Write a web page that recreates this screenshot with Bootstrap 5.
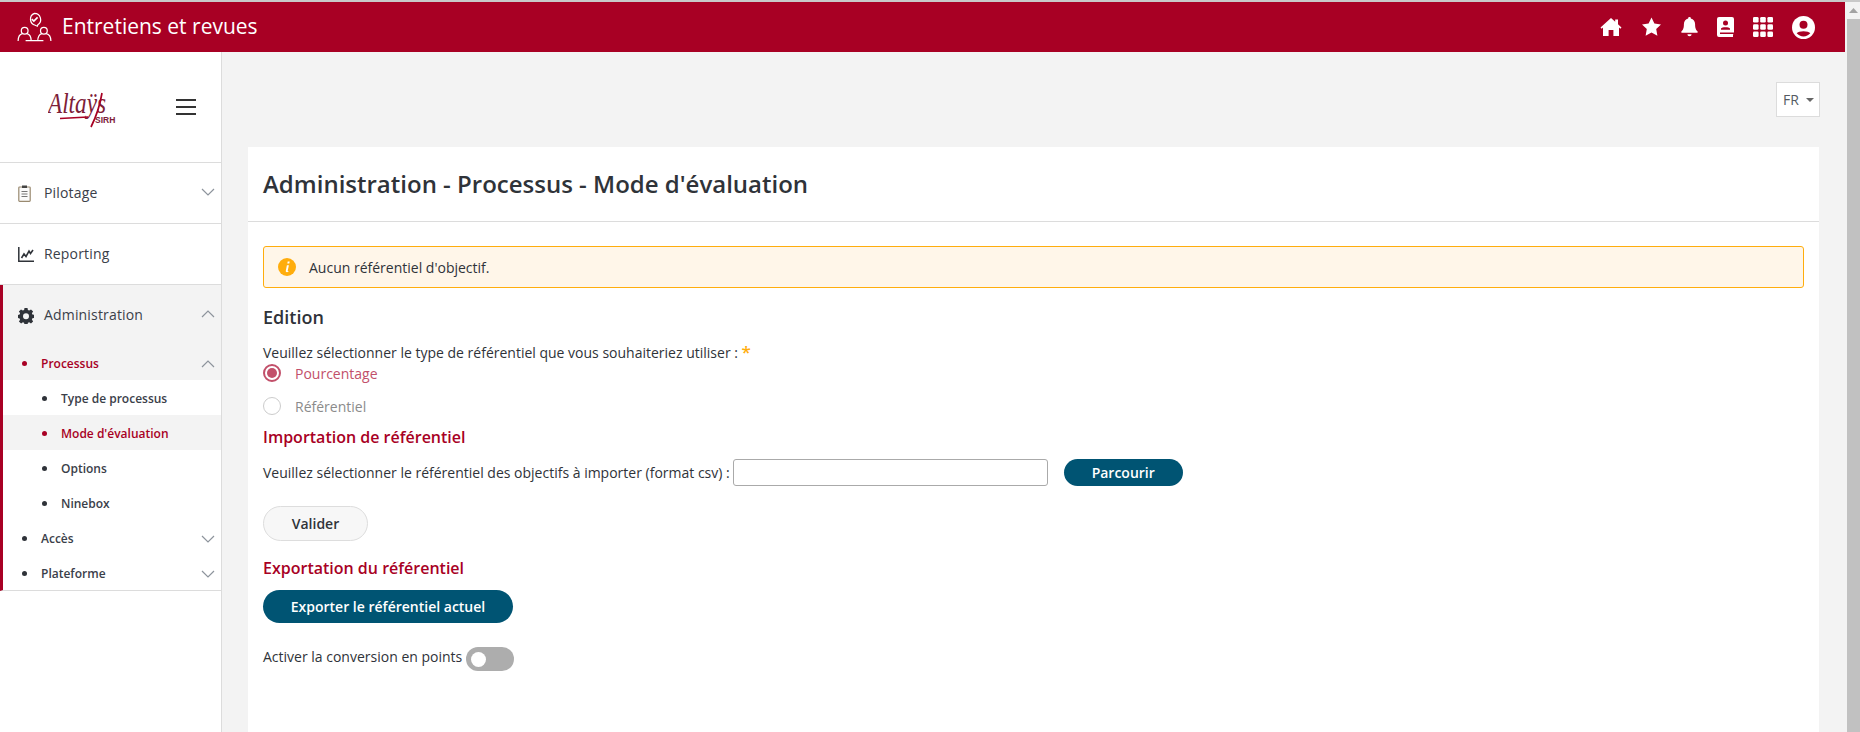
<!doctype html>
<html lang="fr">
<head>
<meta charset="utf-8">
<title>Entretiens et revues</title>
<link href="https://cdn.jsdelivr.net/npm/bootstrap@5.3.0/dist/css/bootstrap.min.css" rel="stylesheet">
<style>
html,body{height:100%;overflow:hidden}
body{font-family:"Open Sans","Noto Sans",sans-serif;font-size:14px;color:#2f3339;background:#f3f3f3}
.top-rule{height:2px;background:#c9c9c9}
.frame{height:730px}
.scroll-track{width:15px;background:#f3f3f3;flex:none;padding-left:2px}
.scroll-arrow{height:17px;color:#a3a3a3}
.scroll-thumb{background:#c1c1c1;height:713px}
.app-bar{height:50px;background:#a80024;color:#fff;padding:0 30px 0 17px;flex:none}
.app-name{font-size:21px;line-height:1;margin-left:10px;padding-bottom:1px}
.app-icons{gap:19px}
.side{width:222px;background:#fff;border-right:1px solid #dcdcdc;flex:none}
.brand-box{height:111px;border-bottom:1px solid #dcdcdc;padding-left:48px;padding-right:25px}
.burger{width:20px;height:16px;border-top:2px solid #333;border-bottom:2px solid #333;background:linear-gradient(#333,#333) center/100% 2px no-repeat}
.menu-top{height:61px;border-bottom:1px solid #dcdcdc;padding:0 6px 2px 18px;font-weight:500;color:#3a4049;font-size:14px;letter-spacing:.012em}
.menu-top .ico{width:20px;margin-right:6px}
.menu-group{border-left:3px solid #a80024;border-bottom:1px solid #dcdcdc}
.menu-head{height:60px;background:#f3f3f3;padding:0 6px 2px 15px;font-weight:500;color:#3a4049;letter-spacing:.012em}
.menu-head .ico{width:20px;margin-right:6px}
.menu-row{height:35px;padding:2px 6px 0 19px;font-size:12px;font-weight:600;color:#3a4049}
.menu-row.sub{padding-left:39px}
.menu-row.on{color:#a80024}
.menu-row.tint{background:#f3f3f3}
.dot{width:5px;height:5px;border-radius:50%;background:#2f3339;margin-right:14px;flex:none}
.on .dot{background:#a80024}
.lang-row{height:95px;padding-top:30px;margin-right:-1px;flex:none}
.lang-box{width:44px;height:35px;background:#fff;border:1px solid #dcdcdc;font-size:14px;color:#555b62;padding-left:6px}
.lang-caret{width:0;height:0;border:4px solid transparent;border-top-color:#666;border-bottom:0;margin-left:7px}
.main-wrap{padding:0 26px;min-width:0}
.sheet{background:#fff;min-height:0}
.sheet-head{height:75px;border-bottom:1px solid #dcdcdc;padding:0 15px}
.sheet-title{font-size:24px;font-weight:600;color:#2f3339;margin:0;line-height:1}
.sheet-body{padding:24px 15px 0 15px}
.notice{height:42px;background:#fff6e9;border:1px solid #ffad0d;border-radius:3px;padding-left:14px;margin-bottom:17px}
.notice-text{margin-left:13px}
.sec-title{font-size:18px;font-weight:600;line-height:24px;margin:0 0 14px}
.line-label{line-height:20px;font-size:14px}
.star{color:#ffad0d;font-size:17px;font-weight:600;line-height:1}
.radio-line{height:34px}
.radio-line.first{height:20px;margin-bottom:6px}
.radio-dot{width:18px;height:18px;border-radius:50%;border:1px solid #ccc;margin-right:14px;flex:none;background:#fff}
.radio-dot.sel{border:2px solid #c2506a;position:relative}
.radio-dot.sel::after{content:"";position:absolute;inset:2px;border-radius:50%;background:#c2506a}
.radio-lab{color:#8b8b8b}
.radio-lab.sel{color:#c2506a}
.red-title{font-size:16px;font-weight:600;color:#a80024;line-height:22px;margin:3px 0 0}
.import-row{margin-top:11px;height:27px}
.file-box{width:315px;height:27px;border:1px solid #aaa;border-radius:3px;background:#fff;margin:0 16px 0 3px}
.pill-dark{background:#005473;color:#fff;border:0;border-radius:20px;font-weight:600;font-size:14px;padding:0}
.pill-dark:hover{background:#005473;color:#fff}
.browse{width:119px;height:27px}
.export{width:250px;height:33px;margin-top:11px}
.pill-light{width:105px;height:35px;border:1px solid #ddd;border-radius:20px;background:#f7f7f7;font-weight:600;font-size:14px;color:#2f3339;padding:0;margin:20px 0 16px}
.switch-row{margin-top:23px}
.switch-row>span:first-child{margin-bottom:5px}
.switcher{width:48px;height:24px;border-radius:12px;background:#adadad;margin-left:4px;padding-left:5px}
.switcher i{display:block;width:15px;height:15px;border-radius:50%;background:#fff}
</style>
</head>
<body>
<div class="top-rule"></div>
<div class="d-flex frame">
  <div class="flex-grow-1 d-flex flex-column" style="min-width:0">
    <header class="app-bar d-flex align-items-center justify-content-between">
      <div class="d-flex align-items-center">
        <svg width="35" height="30" viewBox="0 0 37 32" fill="none" stroke="#fff" stroke-width="1.3" aria-hidden="true">
          <path d="M18.5 1.5a6.6 6.6 0 0 1 3.6 12.1l-.6 1.6-2.2-1.1a6.6 6.6 0 0 1-.8-12.6z"/>
          <path d="M15.6 7.6l2.2 2.2 4-4" stroke-width="1.7"/>
          <circle cx="8" cy="20" r="3.6"/><circle cx="28.5" cy="20" r="3.6"/>
          <path d="M1 31c0-5 2.2-7.4 4.6-8M15 31c0-5-2.2-7.4-4.6-8M22 31c0-5 2.2-7.4 4.3-8M36 31c0-5-2.2-7.4-5-8M9 30.5h19"/>
        </svg>
        <span class="app-name">Entretiens et revues</span>
      </div>
      <div class="d-flex align-items-center app-icons">
        <svg width="22" height="20" viewBox="0 0 22 20" fill="#fff" aria-hidden="true"><path d="M11 1 .5 10.4l1.2 1.3L3 10.6V19h5.6v-6h4.8v6H19v-8.4l1.3 1.1 1.2-1.3L18 7.2V2.500h-2.800v2.200z"/></svg>
        <svg width="21" height="20" viewBox="0 0 20 20" fill="#fff" aria-hidden="true"><path d="M10 .6l2.900 6 6.600.9-4.800 4.600 1.200 6.600L10 15.500l-5.900 3.200 1.200-6.600L.5 7.500l6.600-.9z"/></svg>
        <svg width="17" height="20" viewBox="0 0 17 20" fill="#fff" aria-hidden="true"><path d="M8.500 0a1.300 1.300 0 0 1 1.300 1.500c2.700.6 4.300 2.900 4.300 5.700 0 4.300 1 5.600 2.500 7.300.5.500.2 1.300-.6 1.300H1c-.8 0-1.100-.8-.6-1.300C1.900 12.800 2.900 11.500 2.900 7.200c0-2.800 1.600-5.100 4.300-5.700A1.300 1.300 0 0 1 8.500 0zM6.400 17.200h4.200a2.100 2.100 0 0 1-4.200 0z"/></svg>
        <svg width="17" height="20" viewBox="0 0 17 20" aria-hidden="true"><path fill="#fff" d="M2 0h13a2 2 0 0 1 2 2v14c0 .7-.4 1.200-1 1.400v2.600H2a2 2 0 0 1-2-2V2a2 2 0 0 1 2-2z"/><circle cx="8.500" cy="6" r="2.500" fill="#a80024"/><path fill="#a80024" d="M4 11.500c1-1.700 8-1.700 9 0v1.300H4zM3 15.500h14v1.500H3z"/></svg>
        <svg width="20" height="20" viewBox="0 0 20 20" fill="#fff" aria-hidden="true"><rect width="5.600" height="5.600" rx="1.300"/><rect x="7.200" width="5.600" height="5.600" rx="1.300"/><rect x="14.400" width="5.600" height="5.600" rx="1.300"/><rect y="7.200" width="5.600" height="5.600" rx="1.300"/><rect x="7.200" y="7.200" width="5.600" height="5.600" rx="1.300"/><rect x="14.400" y="7.200" width="5.600" height="5.600" rx="1.300"/><rect y="14.400" width="5.600" height="5.600" rx="1.300"/><rect x="7.200" y="14.400" width="5.600" height="5.600" rx="1.300"/><rect x="14.400" y="14.400" width="5.600" height="5.600" rx="1.300"/></svg>
        <svg width="23" height="23" viewBox="0 0 23 23" aria-hidden="true"><circle cx="11.500" cy="11.500" r="11.500" fill="#fff"/><circle cx="11.500" cy="8.800" r="4" fill="#a80024"/><path fill="#a80024" d="M4.700 17.300c1.500-2.800 12.100-2.800 13.600 0a9 9 0 0 1-13.600 0z"/></svg>
      </div>
    </header>
    <div class="d-flex flex-grow-1" style="min-height:0">
      <aside class="side">
        <div class="brand-box d-flex align-items-center justify-content-between">
          <svg width="70" height="44" viewBox="0 0 70 44" aria-label="Altaÿs SIRH">
            <text x="0" y="28" font-family="Liberation Serif" font-style="italic" font-size="30" fill="#7d2037" textLength="58" lengthAdjust="spacingAndGlyphs">Altaÿs</text>
            <path d="M12 33.500l28-1.500M54 8c-2 12-6 24-11 34" fill="none" stroke="#a80024" stroke-width="1.700"/>
            <text x="47" y="38" font-family="Liberation Sans" font-weight="700" font-size="8.500" fill="#7d2037">SIRH</text>
          </svg>
          <div class="burger"></div>
        </div>
        <div class="menu-top d-flex align-items-center">
          <span class="ico"><svg width="13" height="17" viewBox="0 0 13 17" fill="none"><rect x=".8" y="2" width="11.400" height="14.300" rx=".8" stroke="#9a8a70" stroke-width="1.200" fill="#fbfbfb"/><rect x="4" y=".5" width="5" height="2.500" fill="#444"/><path d="M3.500 6.500h6M3.500 9h6M3.500 11.500h6" stroke="#777" stroke-width="1"/></svg></span>
          <span class="flex-grow-1">Pilotage</span>
          <svg width="14" height="8" viewBox="0 0 14 8" fill="none" stroke="#8d949c" stroke-width="1.200"><path d="M1 1l6 6 6-6"/></svg>
        </div>
        <div class="menu-top d-flex align-items-center">
          <span class="ico"><svg width="16" height="15" viewBox="0 0 16 15" fill="none" stroke="#2f3339"><path d="M.8 0v14.200H16" stroke-width="1.500"/><path d="M3.500 11l2.500-4 2 2.500L11 4l1.500 2.500L15 3" stroke-width="1.600"/></svg></span>
          <span class="flex-grow-1">Reporting</span>
        </div>
        <div class="menu-group">
          <div class="menu-head d-flex align-items-center">
            <span class="ico"><svg width="16" height="16" viewBox="0 0 16 16" aria-hidden="true"><path fill="#2f3339" fill-rule="evenodd" d="M6.500 0h3l.4 2.100 1.300.5L13 1.400l2.100 2.100-1.200 1.800.5 1.200 2.100.4v3l-2.100.4-.5 1.300 1.200 1.800-2.100 2.100-1.800-1.200-1.300.5-.4 2.100h-3l-.4-2.100-1.200-.5-1.800 1.200L.9 13.500l1.200-1.800-.5-1.300L0 10V7l1.600-.5.500-1.200L.9 3.500 3 1.400l1.800 1.200 1.300-.5zM8 5.300a3 3 0 1 0 0 6 3 3 0 0 0 0-6z"/></svg></span>
            <span class="flex-grow-1">Administration</span>
            <svg width="14" height="8" viewBox="0 0 14 8" fill="none" stroke="#8d949c" stroke-width="1.200"><path d="M1 7l6-6 6 6"/></svg>
          </div>
          <div class="menu-row tint on d-flex align-items-center"><span class="dot"></span><span class="flex-grow-1">Processus</span><svg width="14" height="8" viewBox="0 0 14 8" fill="none" stroke="#8d949c" stroke-width="1.200"><path d="M1 7l6-6 6 6"/></svg></div>
          <div class="menu-row sub d-flex align-items-center"><span class="dot"></span><span>Type de processus</span></div>
          <div class="menu-row sub tint on d-flex align-items-center"><span class="dot"></span><span>Mode d'évaluation</span></div>
          <div class="menu-row sub d-flex align-items-center"><span class="dot"></span><span>Options</span></div>
          <div class="menu-row sub d-flex align-items-center"><span class="dot"></span><span>Ninebox</span></div>
          <div class="menu-row d-flex align-items-center"><span class="dot"></span><span class="flex-grow-1">Accès</span><svg width="14" height="8" viewBox="0 0 14 8" fill="none" stroke="#8d949c" stroke-width="1.200"><path d="M1 1l6 6 6-6"/></svg></div>
          <div class="menu-row d-flex align-items-center"><span class="dot"></span><span class="flex-grow-1">Plateforme</span><svg width="14" height="8" viewBox="0 0 14 8" fill="none" stroke="#8d949c" stroke-width="1.200"><path d="M1 1l6 6 6-6"/></svg></div>
        </div>
      </aside>
      <main class="main-wrap flex-grow-1 d-flex flex-column">
        <div class="lang-row d-flex justify-content-end"><div class="lang-box d-flex align-items-center"><span>FR</span><span class="lang-caret"></span></div></div>
        <div class="sheet flex-grow-1">
          <div class="sheet-head d-flex align-items-center"><h1 class="sheet-title">Administration - Processus - Mode d'évaluation</h1></div>
          <div class="sheet-body">
            <div class="notice d-flex align-items-center">
              <svg width="18" height="18" viewBox="0 0 18 18" aria-hidden="true"><circle cx="9" cy="9" r="9" fill="#ffad0d"/><path fill="#fff" d="M9.700 3.500h2l-.4 2h-2zM8.900 7.300h2l-1.200 5.500c-.1.500.4.500 1 .2l-.2.800c-1.500.8-3 .5-2.700-1z"/></svg>
              <span class="notice-text">Aucun référentiel d'objectif.</span>
            </div>
            <h2 class="sec-title">Edition</h2>
            <div class="line-label">Veuillez sélectionner le type de référentiel que vous souhaiteriez utiliser : <span class="star">*</span></div>
            <div class="radio-line first d-flex align-items-center"><span class="radio-dot sel"></span><span class="radio-lab sel">Pourcentage</span></div>
            <div class="radio-line d-flex align-items-center"><span class="radio-dot"></span><span class="radio-lab">Référentiel</span></div>
            <h3 class="red-title">Importation de référentiel</h3>
            <div class="import-row d-flex align-items-center"><span>Veuillez sélectionner le référentiel des objectifs à importer (format csv) :</span><div class="file-box"></div><button type="button" class="btn pill-dark browse">Parcourir</button></div>
            <button type="button" class="btn pill-light d-block">Valider</button>
            <h3 class="red-title">Exportation du référentiel</h3>
            <button type="button" class="btn pill-dark export d-block">Exporter le référentiel actuel</button>
            <div class="switch-row d-flex align-items-center"><span>Activer la conversion en points</span><span class="switcher d-flex align-items-center"><i></i></span></div>
          </div>
        </div>
      </main>
    </div>
  </div>
  <div class="scroll-track">
    <div class="scroll-arrow d-flex align-items-center justify-content-center"><svg width="9" height="5" viewBox="0 0 9 5" fill="currentColor"><path d="M4.500 0L9 5H0z"/></svg></div>
    <div class="scroll-thumb"></div>
  </div>
</div>
<script src="https://cdn.jsdelivr.net/npm/bootstrap@5.3.0/dist/js/bootstrap.bundle.min.js"></script>
</body>
</html>
